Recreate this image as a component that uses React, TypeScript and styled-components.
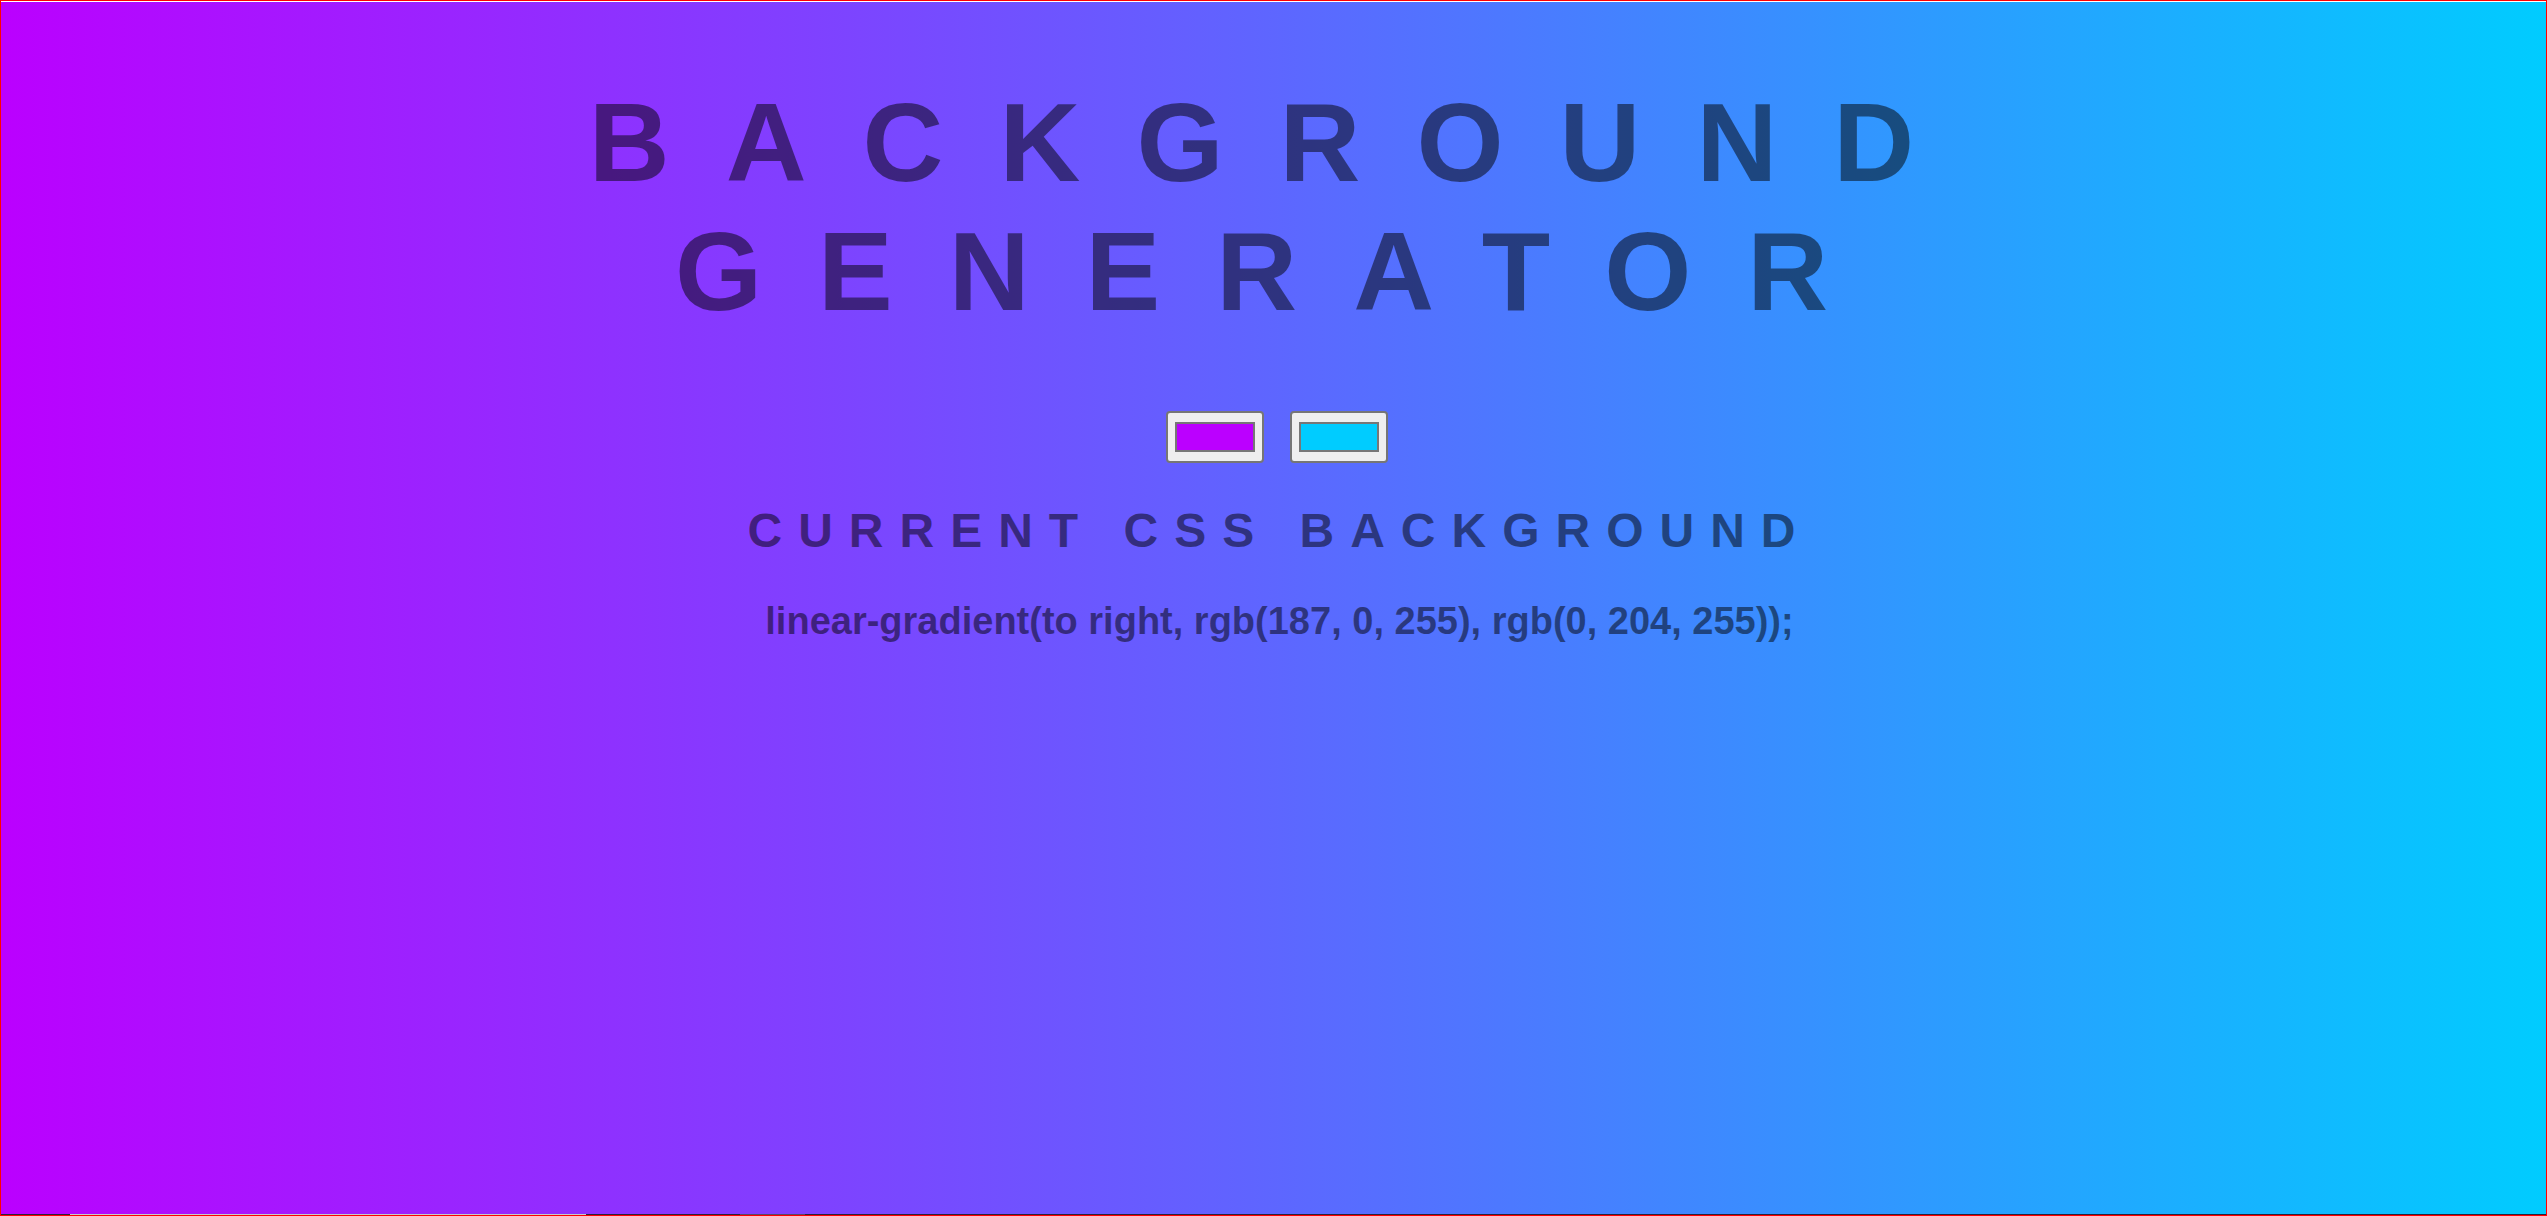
import React, { useState } from 'react';
import styled, { createGlobalStyle } from 'styled-components';

const GlobalStyle = createGlobalStyle`
  html, body {
    margin: 0;
    padding: 0;
    overflow: hidden;
  }
`;

const hexToRgb = (hex: string) => {
  const n = parseInt(hex.slice(1), 16);
  return `rgb(${(n >> 16) & 255}, ${(n >> 8) & 255}, ${n & 255})`;
};

interface IFrame {
  readonly $from: string;
  readonly $to: string;
}

const Frame = styled.div<IFrame>`
  display: flex;
  flex-direction: column;
  box-sizing: border-box;
  width: 100%;
  height: 1216px;
  border: 1px solid #ff0000;
  background: linear-gradient(to right, ${p => p.$from}, ${p => p.$to});
`;

const TopRule = styled.div`
  flex-shrink: 0;
  height: 1px;
  background: #ffffff;
`;

const Page = styled.main`
  flex: 1;
  padding: 0 10px 0 22px;
  text-align: center;
  color: rgba(0, 0, 0, 0.5);
  font-family: 'Liberation Sans', Arial, sans-serif;
`;

const Title = styled.h1`
  margin: 76px 0 75px;
  font-size: 112px;
  font-weight: 700;
  line-height: normal;
  letter-spacing: 56px;
  text-transform: uppercase;
`;

const Swatches = styled.div`
  display: flex;
  justify-content: center;
  gap: 26px;
  padding-right: 6px;
`;

const ColorInput = styled.input.attrs({ type: 'color' })`
  -webkit-appearance: none;
  appearance: none;
  box-sizing: border-box;
  width: 98px;
  height: 52px;
  margin: 0;
  padding: 0;
  border: 2px solid #767676;
  border-radius: 4px;
  background: #efefef;
  cursor: pointer;

  &::-webkit-color-swatch-wrapper {
    padding: 9px 7px;
  }

  &::-webkit-color-swatch {
    border: 2px solid #777777;
    border-radius: 0;
  }
`;

const Subtitle = styled.h2`
  margin: 40px 0 42px;
  font-size: 48px;
  font-weight: 700;
  line-height: normal;
  letter-spacing: 16px;
  text-transform: uppercase;
`;

const CssText = styled.h3`
  margin: 0;
  font-size: 38px;
  font-weight: 700;
  line-height: normal;
`;

const Track = styled.div`
  display: flex;
  flex-shrink: 0;
  height: 1px;
`;

interface ISegment {
  readonly $w?: number;
  readonly $tone: string;
}

const Segment = styled.div<ISegment>`
  ${p => (p.$w ? `width: ${p.$w}px;` : 'flex: 1;')}
  background: ${p => p.$tone};
`;

const App: React.FC = () => {
  const [from, setFrom] = useState('#bb00ff');
  const [to, setTo] = useState('#00ccff');

  const css = `linear-gradient(to right, ${hexToRgb(from)}, ${hexToRgb(to)});`;

  return (
    <>
      <GlobalStyle />
      <Frame $from={from} $to={to}>
        <TopRule />
        <Page>
          <Title>Background Generator</Title>
          <Swatches>
            <ColorInput value={from} onChange={e => setFrom(e.target.value)} />
            <ColorInput value={to} onChange={e => setTo(e.target.value)} />
          </Swatches>
          <Subtitle>Current CSS Background</Subtitle>
          <CssText>{css}</CssText>
        </Page>
        <Track>
          <Segment $w={69} $tone="#2e2238" />
          <Segment $w={516} $tone="#c9c9c9" />
          <Segment $w={154} $tone="#2e2238" />
          <Segment $w={65} $tone="#5a4866" />
          <Segment $tone="#2e2238" />
        </Track>
      </Frame>
    </>
  );
};

export default App;
